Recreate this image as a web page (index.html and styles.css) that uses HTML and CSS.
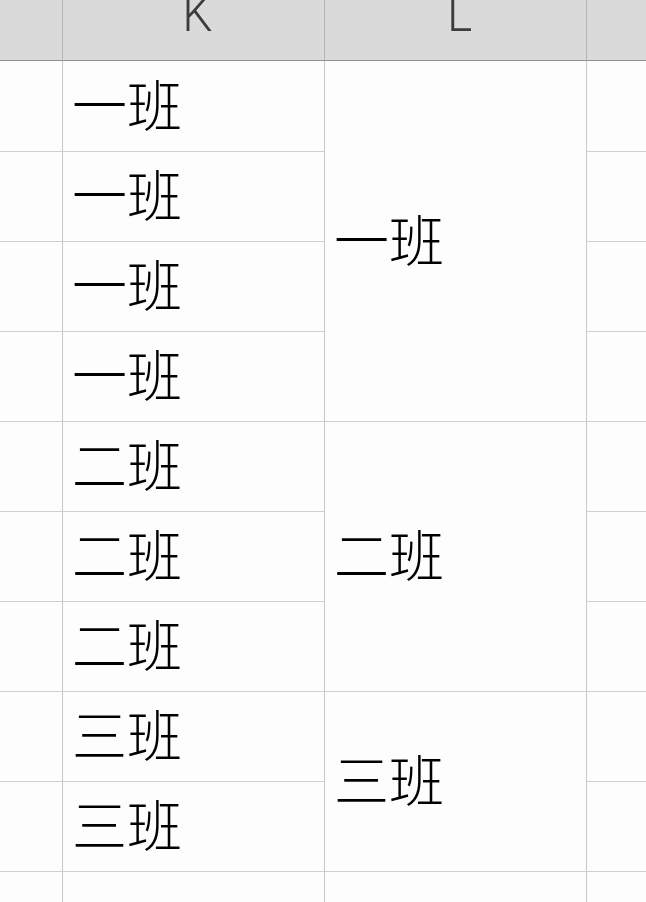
FILE: index.html
```html
<!DOCTYPE html>
<html lang="zh-CN">
<head>
<meta charset="utf-8">
<title>班级合并</title>
<link rel="stylesheet" href="styles.css">
</head>
<body>
<div class="sheet">
  <div class="hd"></div>
  <div class="hd"><span class="col-letter">K</span></div>
  <div class="hd"><span class="col-letter">L</span></div>
  <div class="hd hd-last"></div>

  <div class="c r1 ca"></div><div class="c r1 ck">一班</div><div class="c cl m1">一班</div><div class="c r1 cz"></div>
  <div class="c r2 ca"></div><div class="c r2 ck">一班</div><div class="c r2 cz"></div>
  <div class="c r3 ca"></div><div class="c r3 ck">一班</div><div class="c r3 cz"></div>
  <div class="c r4 ca"></div><div class="c r4 ck">一班</div><div class="c r4 cz"></div>

  <div class="c r5 ca"></div><div class="c r5 ck">二班</div><div class="c cl m2">二班</div><div class="c r5 cz"></div>
  <div class="c r6 ca"></div><div class="c r6 ck">二班</div><div class="c r6 cz"></div>
  <div class="c r7 ca"></div><div class="c r7 ck">二班</div><div class="c r7 cz"></div>

  <div class="c r8 ca"></div><div class="c r8 ck">三班</div><div class="c cl m3">三班</div><div class="c r8 cz"></div>
  <div class="c r9 ca"></div><div class="c r9 ck">三班</div><div class="c r9 cz"></div>

  <div class="c r10 ca"></div><div class="c r10 ck"></div><div class="c r10 clx"></div><div class="c r10 cz"></div>
</div>
</body>
</html>
```

FILE: styles.css
```css
html, body {
  margin: 0;
  padding: 0;
  background: #fdfdfd;
  overflow: hidden;
}

.sheet {
  display: grid;
  grid-template-columns: 63px 262px 262px 59px;
  grid-template-rows: 61px 91px repeat(8, 90px) 30px;
  width: 646px;
  height: 902px;
  overflow: hidden;
  font-family: "Noto Sans CJK SC", "Noto Sans", sans-serif;
}

.hd {
  background: #dadada;
  border-right: 1px solid #b4b4b4;
  border-bottom: 1px solid #8e8e8e;
  display: flex;
  justify-content: center;
  align-items: flex-end;
  overflow: hidden;
}

.hd-last {
  border-right: none;
}

.col-letter {
  font-family: Roboto, "Open Sans", sans-serif;
  font-weight: 300;
  font-size: 52px;
  line-height: 1;
  color: #3c3c3c;
  margin-bottom: 20px;
  margin-left: 8px;
  transform: scaleX(0.92);
}

.c {
  background: #fdfdfd;
  border-right: 1px solid #c9c9c9;
  border-bottom: 1px solid #cfcfcf;
  display: flex;
  align-items: center;
  padding-left: 9px;
  padding-bottom: 8px;
  font-size: 55px;
  font-weight: 300;
  line-height: 1;
  color: #000;
  overflow: hidden;
}

.ca { grid-column: 1; padding-left: 0; }
.ck { grid-column: 2; }
.cl { grid-column: 3; }
.clx { grid-column: 3; }
.cz { grid-column: 4; padding-left: 0; border-right: none; }

.r1 { grid-row: 2; }
.r2 { grid-row: 3; }
.r3 { grid-row: 4; }
.r4 { grid-row: 5; }
.r5 { grid-row: 6; }
.r6 { grid-row: 7; }
.r7 { grid-row: 8; }
.r8 { grid-row: 9; }
.r9 { grid-row: 10; }
.r10 { grid-row: 11; border-bottom: none; }

.m1 { grid-row: 2 / span 4; }
.m2 { grid-row: 6 / span 3; }
.m3 { grid-row: 9 / span 2; }
```
